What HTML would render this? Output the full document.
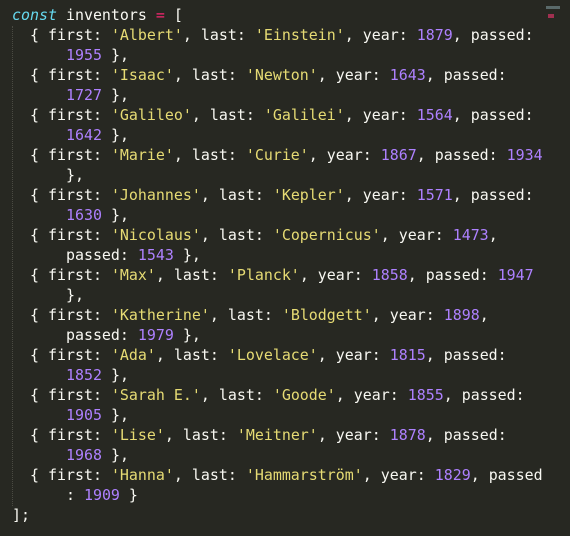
<!DOCTYPE html>
<html><head><style>
html,body{margin:0;padding:0;background:#272822;width:570px;height:536px;overflow:hidden}
pre{margin:0;position:absolute;left:12px;top:5px;font-family:"DejaVu Sans Mono",monospace;font-size:14.95px;line-height:20px;color:#f8f8f2;white-space:pre}
.k{color:#66d9ef;font-style:italic}.o{color:#f92672}.s{color:#e6db74}.n{color:#ae81ff}
.guide{position:absolute;left:12px;top:26px;height:480px;border-left:1px dotted #4a4a42}
.mm{position:absolute;left:546px;top:6px;width:14px;height:3px;background:#5a6a6a}
.mm2{position:absolute;left:548px;top:14px;width:6px;height:4px;background:#a03050}
</style></head><body>
<div class="guide"></div><div class="mm"></div><div class="mm2"></div>
<pre><span class="k">const</span> inventors <span class="o">=</span> [
  { first: <span class="s">'Albert'</span>, last: <span class="s">'Einstein'</span>, year: <span class="n">1879</span>, passed:
      <span class="n">1955</span> },
  { first: <span class="s">'Isaac'</span>, last: <span class="s">'Newton'</span>, year: <span class="n">1643</span>, passed:
      <span class="n">1727</span> },
  { first: <span class="s">'Galileo'</span>, last: <span class="s">'Galilei'</span>, year: <span class="n">1564</span>, passed:
      <span class="n">1642</span> },
  { first: <span class="s">'Marie'</span>, last: <span class="s">'Curie'</span>, year: <span class="n">1867</span>, passed: <span class="n">1934</span>
      },
  { first: <span class="s">'Johannes'</span>, last: <span class="s">'Kepler'</span>, year: <span class="n">1571</span>, passed:
      <span class="n">1630</span> },
  { first: <span class="s">'Nicolaus'</span>, last: <span class="s">'Copernicus'</span>, year: <span class="n">1473</span>,
      passed: <span class="n">1543</span> },
  { first: <span class="s">'Max'</span>, last: <span class="s">'Planck'</span>, year: <span class="n">1858</span>, passed: <span class="n">1947</span>
      },
  { first: <span class="s">'Katherine'</span>, last: <span class="s">'Blodgett'</span>, year: <span class="n">1898</span>,
      passed: <span class="n">1979</span> },
  { first: <span class="s">'Ada'</span>, last: <span class="s">'Lovelace'</span>, year: <span class="n">1815</span>, passed:
      <span class="n">1852</span> },
  { first: <span class="s">'Sarah E.'</span>, last: <span class="s">'Goode'</span>, year: <span class="n">1855</span>, passed:
      <span class="n">1905</span> },
  { first: <span class="s">'Lise'</span>, last: <span class="s">'Meitner'</span>, year: <span class="n">1878</span>, passed:
      <span class="n">1968</span> },
  { first: <span class="s">'Hanna'</span>, last: <span class="s">'Hammarström'</span>, year: <span class="n">1829</span>, passed
      : <span class="n">1909</span> }
];</pre>
</body></html>
